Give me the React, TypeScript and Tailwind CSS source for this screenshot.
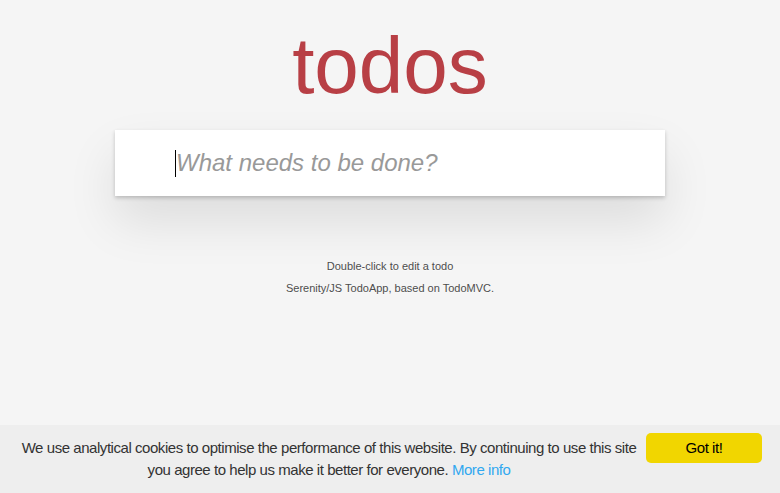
export default function App() {
    return (
        <div className="min-h-screen w-full bg-[#f5f5f5] font-['Liberation_Sans',Arial,sans-serif]">
            {/* TODO APP */}
            <section className="mx-auto w-[550px] pt-[26px]">
                <h1 className="text-center text-[80px] leading-[80px] font-extralight text-[#b83f45] mb-[24px]">todos</h1>

                <div className="bg-white h-[66px] pl-[60px] pr-4 flex items-center shadow-[0_2px_4px_0_rgba(0,0,0,0.2),0_25px_50px_0_rgba(0,0,0,0.1)]">
                    <span className="w-px h-[27px] bg-black" />
                    <span className="text-[24px] italic text-[#999999]">What needs to be done?</span>
                </div>
            </section>

            {/* INFO */}
            <footer className="mt-[65px] text-center text-[11px] leading-none text-[#4d4d4d] [text-shadow:0_1px_0_rgba(255,255,255,0.5)]">
                <p className="mb-[11px]">Double-click to edit a todo</p>
                <p>Serenity/JS TodoApp, based on TodoMVC.</p>
            </footer>

            {/* COOKIE BANNER */}
            <div className="fixed bottom-0 left-0 right-0 h-[68px] bg-[#eeeeee] flex items-start pl-[12px] pr-[18px] tracking-[-0.45px]">
                <p className="flex-1 pt-[12px] text-center text-[15px] leading-[22px] text-[#333333]">
                    We use analytical cookies to optimise the performance of this website. By continuing to use this site you agree to help us make it better for everyone.{' '}
                    <a href="#" className="text-[#31a8f0]">More info</a>
                </p>
                <button className="mt-[8px] w-[116px] h-[30px] rounded-[5px] bg-[#f1d600] text-[15px] text-black">Got it!</button>
            </div>
        </div>
    );
}
